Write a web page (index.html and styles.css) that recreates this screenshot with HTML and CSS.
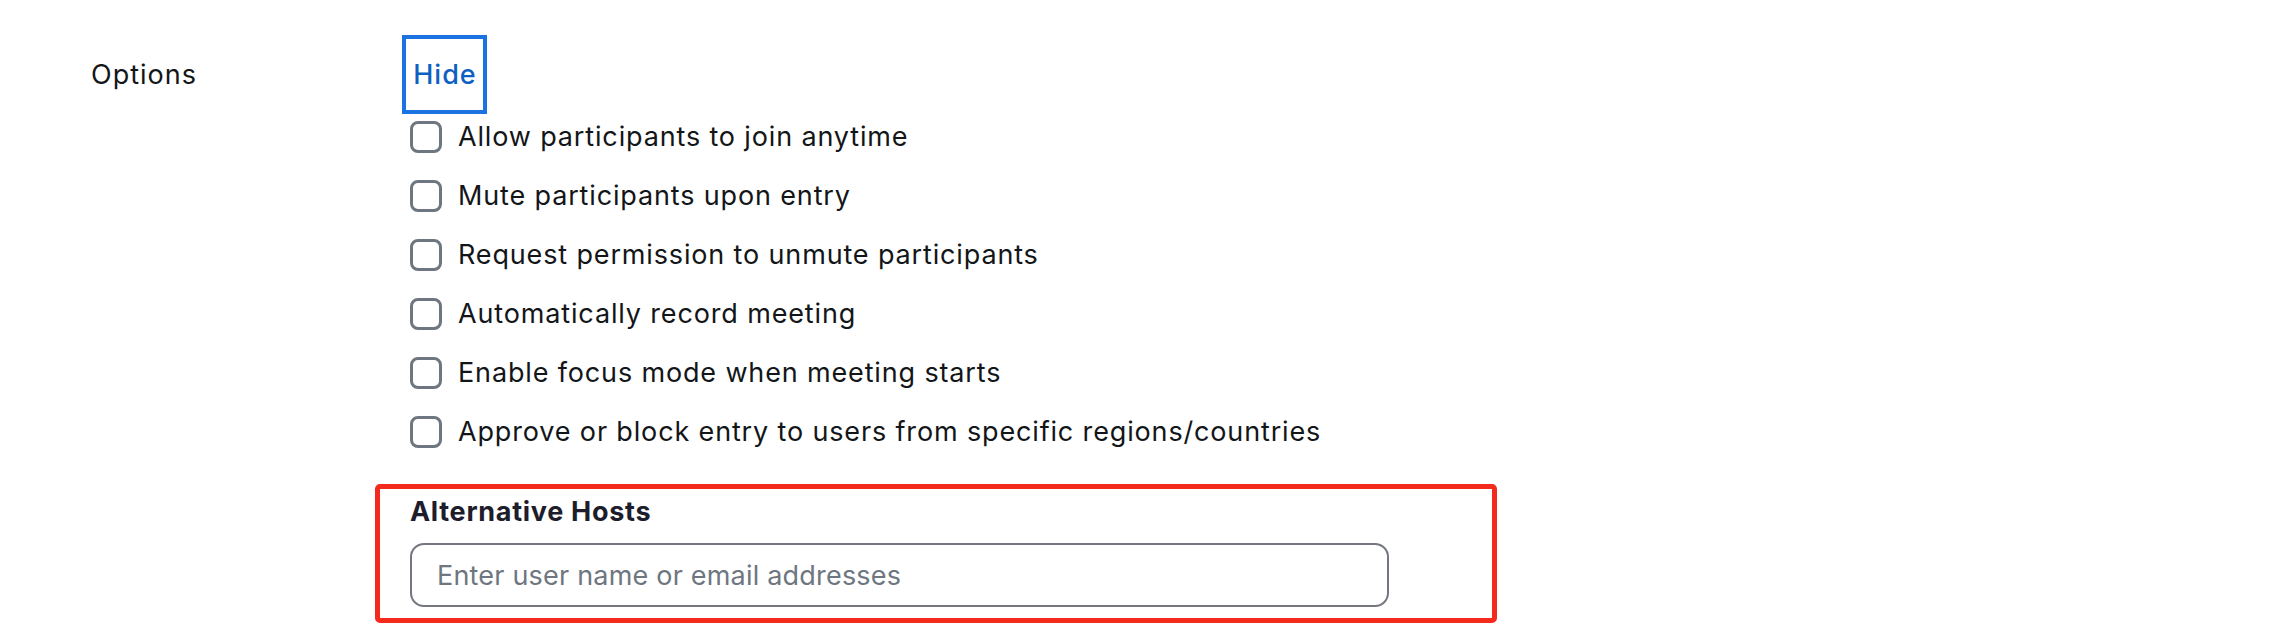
FILE: index.html
```html
<!DOCTYPE html>
<html lang="en">
<head>
<meta charset="utf-8">
<title>Options</title>
<link rel="stylesheet" href="styles.css">
</head>
<body>
<div class="options-row">
  <div class="label">Options</div>
  <div class="content">
    <button class="hide-btn" type="button">Hide</button>
    <ul class="checks">
      <li class="check"><span class="box"></span><span class="check-text">Allow participants to join anytime</span></li>
      <li class="check"><span class="box"></span><span class="check-text">Mute participants upon entry</span></li>
      <li class="check"><span class="box"></span><span class="check-text">Request permission to unmute participants</span></li>
      <li class="check"><span class="box"></span><span class="check-text">Automatically record meeting</span></li>
      <li class="check"><span class="box"></span><span class="check-text">Enable focus mode when meeting starts</span></li>
      <li class="check"><span class="box"></span><span class="check-text">Approve or block entry to users from specific regions/countries</span></li>
    </ul>
    <div class="alt-hosts">
      <div class="alt-title">Alternative Hosts</div>
      <input class="alt-input" type="text" placeholder="Enter user name or email addresses">
    </div>
  </div>
</div>
</body>
</html>
```
FILE: styles.css
```css
html, body {
  margin: 0;
  padding: 0;
  background: #ffffff;
}
body {
  font-family: Inter, "Noto Sans", "Liberation Sans", sans-serif;
  font-size: 27px;
  color: #131619;
  letter-spacing: 0.85px;
}
.options-row {
  display: flex;
  align-items: flex-start;
  padding: 35px 0 0 91px;
}
.label {
  width: 311px;
  flex: none;
  line-height: 79px;
  letter-spacing: 1px;
}
.content {
  display: flex;
  flex-direction: column;
  align-items: flex-start;
}
.hide-btn {
  font-family: inherit;
  font-size: 27px;
  font-weight: 500;
  letter-spacing: 1px;
  color: #0e5fc2;
  background: #ffffff;
  border: 4px solid #1a73e0;
  border-radius: 0;
  box-sizing: border-box;
  width: 85px;
  padding: 0 0 0 1px;
  text-align: center;
  height: 79px;
  line-height: 71px;
  margin: 0;
  cursor: pointer;
}
.checks {
  list-style: none;
  margin: 7px 0 0 8px;
  padding: 0;
  display: flex;
  flex-direction: column;
  gap: 27px;
}
.check {
  display: flex;
  align-items: center;
  gap: 16px;
  height: 32px;
  line-height: 32px;
}
.box {
  width: 32px;
  height: 32px;
  box-sizing: border-box;
  border: 3px solid #6e7680;
  border-radius: 8px;
  flex: none;
  background: #ffffff;
}
.alt-hosts {
  margin: 36px 0 0 -27px;
  width: 1122px;
  height: 139px;
  box-sizing: border-box;
  border: 5px solid #f42a1d;
  border-radius: 5px;
  padding: 7px 0 0 30px;
  display: flex;
  flex-direction: column;
  gap: 15px;
}
.alt-title {
  font-weight: 700;
  line-height: 32px;
  letter-spacing: 0.7px;
  color: #1d1d2b;
}
.alt-input {
  width: 979px;
  height: 64px;
  box-sizing: border-box;
  border: 2px solid #747680;
  border-radius: 14px;
  padding: 0 20px 0 25px;
  font-family: inherit;
  font-size: 27px;
  letter-spacing: 0.2px;
  color: #131619;
  outline: none;
  margin: 0;
}
.alt-input::placeholder {
  color: #6e7680;
  opacity: 1;
}
```
